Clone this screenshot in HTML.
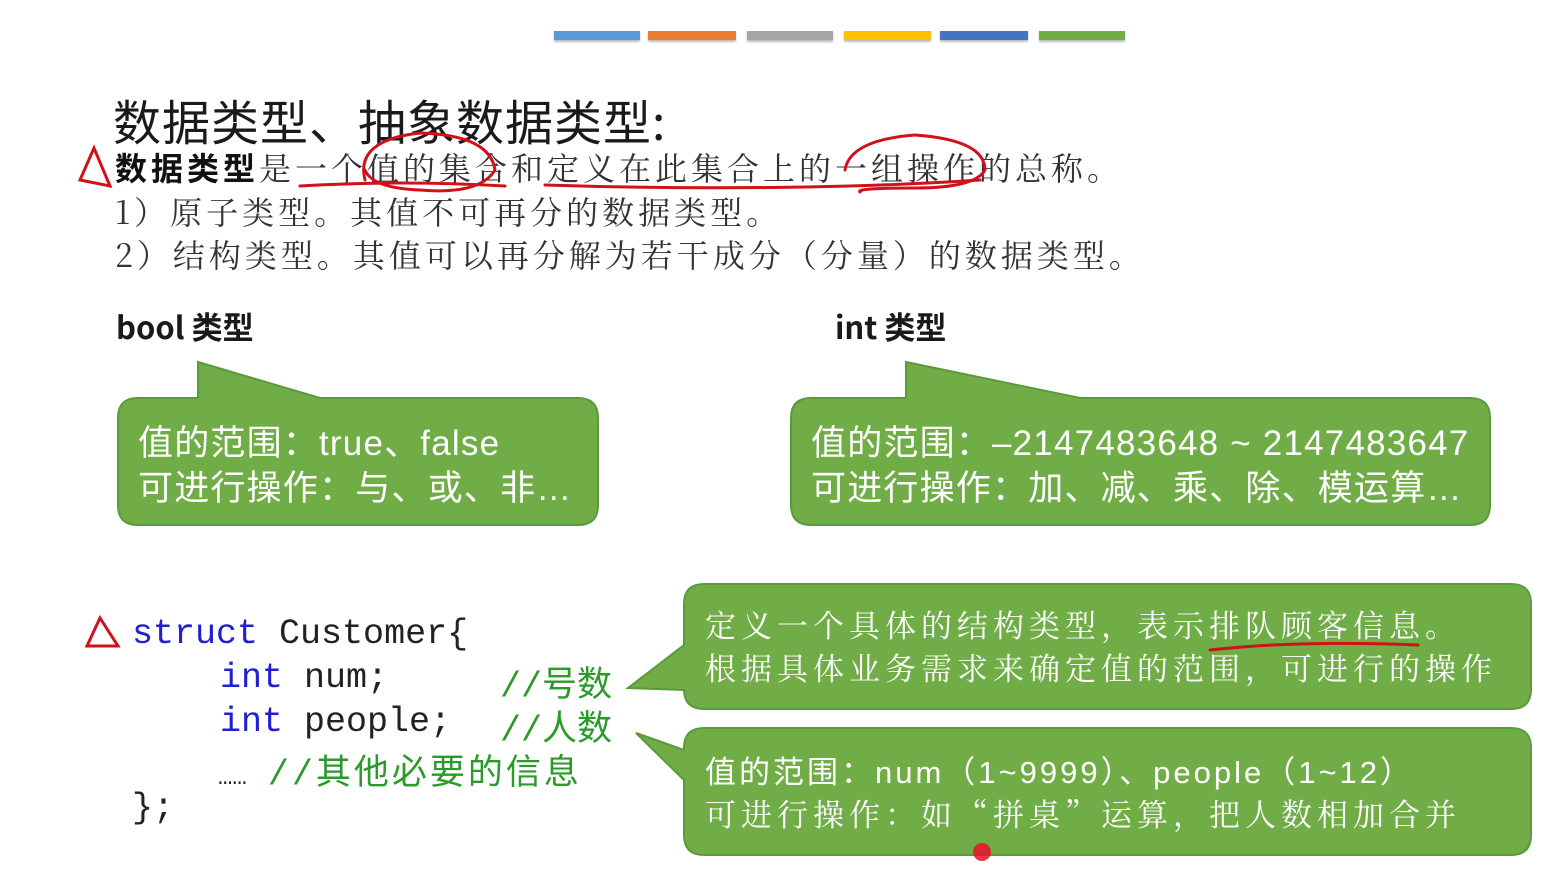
<!DOCTYPE html>
<html><head><meta charset="utf-8"><style>
body{margin:0;width:1559px;height:872px;background:#fff;position:relative;overflow:hidden;font-family:"Liberation Sans","Noto Sans CJK SC",sans-serif;}
.a{position:absolute;white-space:nowrap}
.bar{position:absolute;top:31px;height:9px;box-shadow:0 2px 2px #bbb}
.t{color:#1a1a1a;font-family:"Noto Sans CJK SC",sans-serif}
.s{color:#333;font-family:"Noto Serif CJK SC",serif;font-size:32px;letter-spacing:4px}
.w{color:#fff;font-size:35px;letter-spacing:1.2px;font-family:"Liberation Sans","Noto Sans CJK SC",sans-serif}
.m{font-family:"Liberation Mono","Noto Sans CJK SC",monospace;font-size:35px}
</style></head><body>
<div class="bar" style="left:554px;width:86px;background:#5b9bd5"></div>
<div class="bar" style="left:648px;width:88px;background:#ed7d31"></div>
<div class="bar" style="left:747px;width:86px;background:#a5a5a5"></div>
<div class="bar" style="left:844px;width:87px;background:#ffc000"></div>
<div class="bar" style="left:940px;width:88px;background:#4472c4"></div>
<div class="bar" style="left:1039px;width:86px;background:#70ad47"></div>

<div class="a t" style="left:113px;top:84px;font-size:48px;letter-spacing:1px">数据类型、抽象数据类型:</div>
<div class="a s" style="left:115px;top:144px"><b style="font-family:'Noto Sans CJK SC';color:#111">数据类型</b>是一个值的集合和定义在此集合上的一组操作的总称。</div>
<div class="a s" style="left:115px;top:188px">1）原子类型。其值不可再分的数据类型。</div>
<div class="a s" style="left:115px;top:231px">2）结构类型。其值可以再分解为若干成分（分量）的数据类型。</div>

<div class="a t" style="left:116px;top:303px;font-size:31px;font-weight:bold">bool 类型</div>
<div class="a t" style="left:835px;top:303px;font-size:31px;font-weight:bold">int 类型</div>

<svg class="a" style="left:0;top:0" width="1559" height="872">
<g fill="#70ad47" stroke="#5a9a3a" stroke-width="2">
<path d="M118,418 Q118,398 138,398 L198,398 L198,362 L320,398 L578,398 Q598,398 598,418 L598,505 Q598,525 578,525 L138,525 Q118,525 118,505 Z"/>
<path d="M791,418 Q791,398 811,398 L906,398 L906,362 L1080,398 L1470,398 Q1490,398 1490,418 L1490,505 Q1490,525 1470,525 L811,525 Q791,525 791,505 Z"/>
<path d="M704,584 L1511,584 Q1531,584 1531,604 L1531,689 Q1531,709 1511,709 L704,709 Q684,709 684,689 L684,690 L628,688 L684,645 L684,604 Q684,584 704,584 Z"/>
<path d="M704,728 L1511,728 Q1531,728 1531,748 L1531,835 Q1531,855 1511,855 L704,855 Q684,855 684,835 L684,780 L636,733 L684,750 L684,748 Q684,728 704,728 Z"/>
</g>
<g fill="none" stroke="#d0101a" stroke-width="3" stroke-linecap="round">
<path d="M94,148 L80,180 L110,186 Z"/>
<path d="M300,186 Q400,180 505,186"/>
<path d="M545,185 Q700,190 850,186 Q920,184 980,180"/>
<path d="M365,180 Q355,140 420,133 Q490,135 495,170 Q480,195 420,190 Q372,188 365,170"/>
<path d="M845,170 Q850,140 915,135 Q985,140 985,170 Q975,188 915,188 Q855,188 860,192"/>
<path d="M100,618 L87,646 L118,646 Z"/>
<path d="M1210,650 Q1300,640 1418,645"/>
</g>
<circle cx="982" cy="852" r="9" fill="#e8102a" opacity="0.85"/>
</svg>

<div class="a w" style="left:138px;top:415px">值的范围：true、false</div>
<div class="a w" style="left:138px;top:460px">可进行操作：与、或、非…</div>
<div class="a w" style="left:811px;top:415px">值的范围：–2147483648 ~ 2147483647</div>
<div class="a w" style="left:811px;top:460px">可进行操作：加、减、乘、除、模运算…</div>
<div class="a w" style="left:705px;top:601px;font-family:'Noto Serif CJK SC',serif;font-size:31px;letter-spacing:5px">定义一个具体的结构类型，表示排队顾客信息。</div>
<div class="a w" style="left:705px;top:644px;font-family:'Noto Serif CJK SC',serif;font-size:31px;letter-spacing:5px">根据具体业务需求来确定值的范围，可进行的操作</div>
<div class="a w" style="left:705px;top:747px;font-size:31px;letter-spacing:3px">值的范围：num（1~9999）、people（1~12）</div>
<div class="a w" style="left:705px;top:790px;font-family:'Noto Serif CJK SC',serif;font-size:31px;letter-spacing:5px">可进行操作：如“拼桌”运算，把人数相加合并</div>

<div class="a m" style="left:132px;top:614px"><span style="color:#2020d0">struct</span> <span style="color:#222">Customer{</span></div>
<div class="a m" style="left:220px;top:658px"><span style="color:#2020d0">int</span> <span style="color:#222">num;</span></div>
<div class="a m" style="left:500px;top:656px;color:#2a9a2a">//号数</div>
<div class="a m" style="left:220px;top:702px"><span style="color:#2020d0">int</span> <span style="color:#222">people;</span></div>
<div class="a m" style="left:500px;top:700px;color:#2a9a2a">//人数</div>
<div class="a m" style="left:218px;top:744px"><span style="color:#222;font-size:24px">……</span> <span style="color:#2a9a2a;letter-spacing:3px">//其他必要的信息</span></div>
<div class="a m" style="left:132px;top:788px;color:#222">};</div>
</body></html>
